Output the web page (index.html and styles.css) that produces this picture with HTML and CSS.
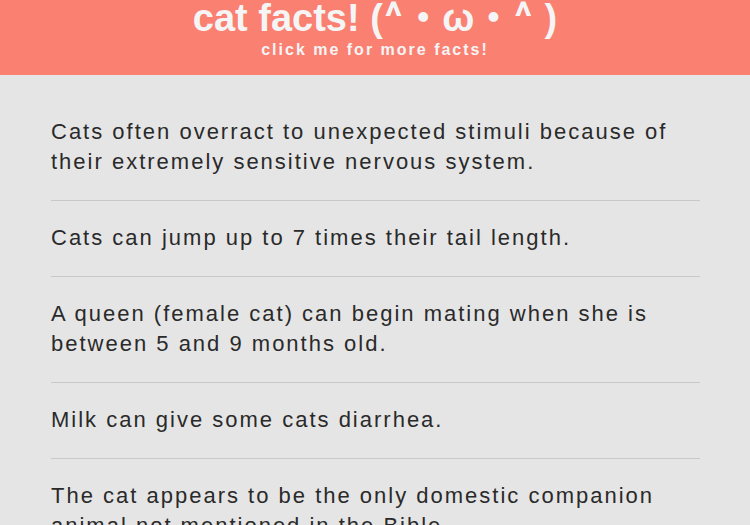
FILE: index.html
```html
<!DOCTYPE html>
<html lang="en">
<head>
<meta charset="utf-8">
<title>cat facts!</title>
<link rel="stylesheet" href="styles.css">
</head>
<body>
<header class="banner">
<h1 class="title">cat facts! (<span class="ear">^</span>・ω・<span class="ear">^</span> )</h1>
<button class="more" type="button">click me for more facts!</button>
</header>
<main class="facts">
<p class="fact">Cats often overract to unexpected stimuli because of their extremely sensitive nervous system.</p>
<p class="fact">Cats can jump up to 7 times their tail length.</p>
<p class="fact">A queen (female cat) can begin mating when she is between 5 and 9 months old.</p>
<p class="fact">Milk can give some cats diarrhea.</p>
<p class="fact">The cat appears to be the only domestic companion animal not mentioned in the Bible.</p>
</main>
</body>
</html>
```
FILE: styles.css
```css
html {
  height: 100%;
  overflow: hidden;
}

body {
  margin: 0;
  background: #e5e5e5;
  color: #2a2a2a;
  font-family: "Liberation Sans", "Noto Sans CJK JP", sans-serif;
}

.banner {
  display: flex;
  flex-direction: column;
  align-items: center;
  padding-bottom: 11px;
  background: salmon;
  color: #f5f5f5;
}

.title {
  margin: 0;
  font-size: 38px;
  line-height: 36px;
  white-space: nowrap;
}

.ear {
  padding: 0 2px;
  font-family: Roboto, sans-serif;
  font-size: 40px;
  line-height: 1px;
}

.more {
  margin: 0;
  padding: 4px 0;
  border: 0;
  background: none;
  color: inherit;
  font: bold 16px/20px "Liberation Sans", sans-serif;
  letter-spacing: 2px;
  cursor: pointer;
}

.facts {
  padding: 20px 50px 0 51px;
}

.fact {
  margin: 0;
  padding: 22px 0 23px;
  border-bottom: 1px solid #c8c8c8;
  font-size: 22px;
  line-height: 30px;
  letter-spacing: 2px;
}
```
